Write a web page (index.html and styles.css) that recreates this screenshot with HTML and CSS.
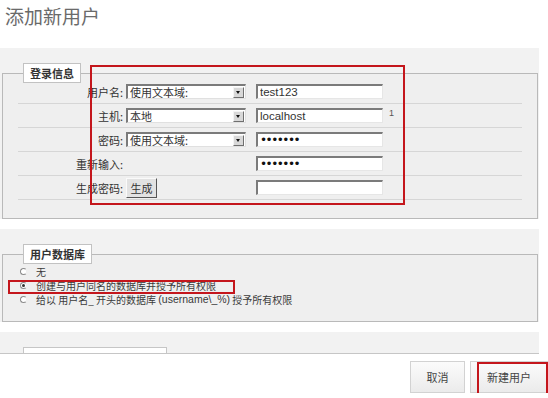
FILE: index.html
```html
<!DOCTYPE html>
<html lang="zh-CN">
<head>
    <meta charset="UTF-8">
    <title>添加新用户</title>
    <link rel="stylesheet" href="styles.css">
</head>
<body>
<div class="page">
    <h1 class="title">添加新用户</h1>

    <!-- 登录信息 -->
    <div class="panel">
        <fieldset class="group">
            <legend>登录信息</legend>
            <div class="rows">
                <div class="row">
                    <label class="label">用户名:</label>
                    <span class="cell">
                        <span class="select"><span class="select-text">使用文本域:</span><span class="select-arrow"></span></span>
                    </span>
                    <input class="field" type="text" value="test123">
                </div>
                <div class="row">
                    <label class="label">主机:</label>
                    <span class="cell">
                        <span class="select"><span class="select-text">本地</span><span class="select-arrow"></span></span>
                    </span>
                    <input class="field" type="text" value="localhost">
                    <span class="note">1</span>
                </div>
                <div class="row">
                    <label class="label">密码:</label>
                    <span class="cell">
                        <span class="select"><span class="select-text">使用文本域:</span><span class="select-arrow"></span></span>
                    </span>
                    <input class="field secret" type="password" value="1234567">
                </div>
                <div class="row">
                    <label class="label">重新输入:</label>
                    <span class="cell"></span>
                    <input class="field secret" type="password" value="1234567">
                </div>
                <div class="row">
                    <label class="label">生成密码:</label>
                    <span class="cell"><button class="gen-btn">生成</button></span>
                    <input class="field" type="text" value="">
                </div>
            </div>
        </fieldset>
    </div>

    <!-- 用户数据库 -->
    <div class="panel">
        <fieldset class="group">
            <legend>用户数据库</legend>
            <div class="options">
                <div class="option"><span class="radio"></span>无</div>
                <div class="option"><span class="radio checked"></span>创建与用户同名的数据库并授予所有权限</div>
                <div class="option"><span class="radio"></span>给以 用户名_ 开头的数据库 <span class="latin">(username\_%)</span> 授予所有权限</div>
            </div>
        </fieldset>
    </div>

    <!-- next group, cut off -->
    <div class="panel short">
        <span class="stub"></span>
    </div>

    <div class="actions">
        <button class="btn cancel">取消</button>
        <button class="btn">新建用户</button>
    </div>

    <!-- red annotation boxes -->
    <div class="mark mark-login"></div>
    <div class="mark mark-db"></div>
    <div class="mark mark-submit"></div>
</div>
</body>
</html>
```

FILE: styles.css
```css
body {
    margin: 0;
    background: #fff;
    font-family: "Noto Sans CJK SC", sans-serif;
    font-size: 11px;
    color: #333;
}

.page {
    position: relative;
    width: 548px;
}

.title {
    margin: 0;
    padding: 4px 0 0 5px;
    font-size: 19px;
    line-height: 24px;
    font-weight: normal;
    color: #6a6a6a;
}

/* gray panels with fieldsets */
.panel {
    width: 539px;
    box-sizing: border-box;
    margin-top: 20px;
    padding: 15px 1px 0 2px;
    background: #f2f2f2;
}

.panel + .panel {
    margin-top: 10px;
}

.group {
    margin: 0;
    padding: 0;
    border: 1px solid #b9b9b9;
    background: #efefef;
}

.group legend {
    margin-left: 20px;
    padding: 2px 6px;
    line-height: 14px;
    font-size: 11px;
    font-weight: bold;
    color: #333;
    background: #fff;
    border: 1px solid #c2c2c2;
}

/* login rows */
.rows {
    margin-top: -3px;
    padding: 0 15px 18px 15px;
}

.row {
    display: flex;
    align-items: center;
    height: 23px;
    border-bottom: 1px solid #d6d6d6;
}

.label {
    flex: 0 0 108px;
    box-sizing: border-box;
    padding-right: 3px;
    text-align: right;
}

.cell {
    flex: 0 0 120px;
    display: flex;
    align-items: center;
}

.select {
    display: flex;
    align-items: center;
    width: 120px;
    height: 15px;
    box-sizing: border-box;
    background: #fff;
    border-style: solid;
    border-width: 2px 1px 1px 2px;
    border-color: #7b7b7b #e0e0e0 #e0e0e0 #7b7b7b;
}

.select-text {
    flex: 1;
    padding-left: 2px;
    line-height: 12px;
}

.select-arrow {
    position: relative;
    width: 9px;
    height: 9px;
    margin-right: 1px;
    background: #d8d8d8;
    border: 1px solid;
    border-color: #f4f4f4 #6f6f6f #6f6f6f #f4f4f4;
}

.select-arrow::after {
    content: "";
    position: absolute;
    left: 2px;
    top: 3px;
    border-style: solid;
    border-width: 3px 2.5px 0 2.5px;
    border-color: #111 transparent transparent transparent;
}

.field {
    width: 127px;
    height: 15px;
    box-sizing: border-box;
    margin: 0 0 0 10px;
    padding: 0 2px;
    background: #fff;
    border-style: solid;
    border-width: 2px 1px 1px 2px;
    border-color: #7b7b7b #e6e6e6 #e6e6e6 #7b7b7b;
    font-family: "Liberation Sans", sans-serif;
    font-size: 11.5px;
    color: #333;
    outline: none;
}

.field.secret {
    font-family: "DejaVu Sans", sans-serif;
    font-size: 12px;
    letter-spacing: -1.5px;
    color: #111;
}

.note {
    margin-left: 6px;
    margin-top: -6px;
    font-family: "Liberation Sans", sans-serif;
    font-size: 9px;
    color: #555;
}

.gen-btn {
    width: 31px;
    height: 20px;
    padding: 0;
    font-family: inherit;
    font-size: 11px;
    color: #333;
    background: #e2e2e2;
    border: 1px solid;
    border-color: #fafafa #555 #555 #fafafa;
}

/* database options */
.options {
    padding: 0 0 15px 17px;
}

.option {
    display: flex;
    align-items: center;
    height: 14px;
    font-size: 10px;
    color: #3a3a3a;
    white-space: pre;
}

.latin {
    font-family: "Liberation Sans", sans-serif;
    font-size: 10.5px;
}

.radio {
    position: relative;
    width: 7px;
    height: 7px;
    box-sizing: border-box;
    margin-right: 9px;
    border: 1px solid #8a8a8a;
    border-right-color: #eee;
    border-radius: 50%;
    background: #fff;
}

.radio.checked::after {
    content: "";
    position: absolute;
    left: 1px;
    top: 1px;
    width: 3px;
    height: 3px;
    border-radius: 50%;
    background: #333;
}

/* cut-off third panel */
.panel.short {
    height: 22px;
    padding: 15px 0 0 0;
    overflow: hidden;
    border-bottom: 1px solid #c6c6c6;
}

.stub {
    display: block;
    width: 144px;
    height: 20px;
    margin-left: 23px;
    box-sizing: border-box;
    background: #fff;
    border: 1px solid #c6c6c6;
}

/* bottom buttons */
.actions {
    display: flex;
    justify-content: flex-end;
    gap: 5px;
    margin-top: 7px;
}

.btn {
    width: 78px;
    height: 32px;
    padding: 0;
    font-family: inherit;
    font-size: 11px;
    color: #444;
    background: linear-gradient(#fbfbfb, #ebebeb);
    border: 1px solid #d2d2d2;
}

.btn.cancel {
    width: 55px;
}

/* red highlight frames */
.mark {
    position: absolute;
    box-sizing: border-box;
    border: 2px solid #c4161c;
}

.mark-login {
    left: 90px;
    top: 65px;
    width: 315px;
    height: 140px;
}

.mark-db {
    left: 8px;
    top: 280px;
    width: 227px;
    height: 14px;
}

.mark-submit {
    left: 477px;
    top: 362px;
    width: 71px;
    height: 33px;
}
```
